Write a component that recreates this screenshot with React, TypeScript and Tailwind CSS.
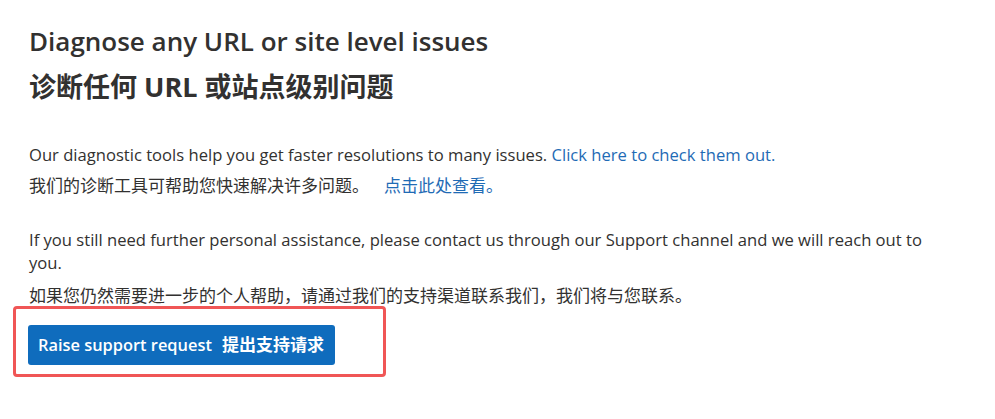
export default function App() {
  return (
    <div className="min-h-screen bg-white px-[29px] pt-[22px] font-['Open_Sans','Noto_Sans_CJK_SC',sans-serif] text-[#323130]">
      <h1 className="text-[26px] font-semibold leading-[38px]">Diagnose any URL or site level issues</h1>
      <h2 className="mt-[8px] text-[27px] font-bold leading-[38px]">诊断任何 URL 或站点级别问题</h2>

      <div className="mt-[37px] w-[922px] text-[16.6px] leading-[24px]">
        <p>
          Our diagnostic tools help you get faster resolutions to many issues.{" "}
          <a href="#" className="text-[#1f6bb5]">Click here to check them out.</a>
        </p>
        <p className="mt-[7px]">
          <span className="text-[17px]">我们的诊断工具可帮助您快速解决许多问题。</span>
          <a href="#" className="ml-[15px] text-[17px] text-[#1f6bb5]">点击此处查看。</a>
        </p>

        <p className="mt-[30px] leading-[23px]">
          If you still need further personal assistance, please contact us through our Support channel and we will reach out to you.
        </p>
        <p className="mt-[10px] text-[17px]">如果您仍然需要进一步的个人帮助，请通过我们的支持渠道联系我们，我们将与您联系。</p>
      </div>

      <div className="ml-[-16px] mt-[-2px] h-[71px] w-[373px] rounded-[4px] border-[3px] border-[#f05656] pl-[12px] pt-[16px]">
        <button className="flex h-[40px] w-[307px] items-center whitespace-nowrap rounded-[3px] bg-[#0f6cbd] px-[10px] font-semibold text-white">
          <span className="text-[16.4px]">Raise support request</span>
          <span className="ml-[10px] text-[17px] font-bold">提出支持请求</span>
        </button>
      </div>
    </div>
  )
}
